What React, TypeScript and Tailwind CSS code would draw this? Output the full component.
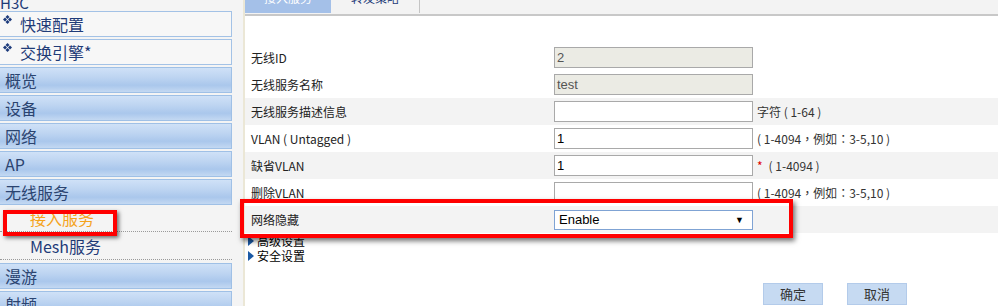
import React from "react";

const CJK = "font-['Noto_Sans_CJK_SC','Noto_Sans',sans-serif]";
const TC = "font-['Noto_Sans_CJK_TC','Noto_Sans_CJK_SC',sans-serif]";
const LAT = "font-['Liberation_Sans','Noto_Sans_CJK_SC',sans-serif]";

const Diamond = () => (
  <svg width="9" height="9" viewBox="0 0 9 9" className="absolute left-[3px] top-[3px]">
    <polygon points="4.5,0 6.5,2 4.5,4 2.5,2" fill="#1d3b7c" />
    <polygon points="2,2.5 4,4.5 2,6.5 0,4.5" fill="#1d3b7c" />
    <polygon points="7,2.5 9,4.5 7,6.5 5,4.5" fill="#1d3b7c" />
    <polygon points="4.5,5 6.5,7 4.5,9 2.5,7" fill="#1d3b7c" />
  </svg>
);

const TopItem = ({ label }: { label: string }) => (
  <div className="relative h-[26px] mb-[2px] border border-l-0 border-[#a3c2e6] bg-[#f7f7f7] flex items-center pl-[20px] text-[16px] leading-[20px] text-[#1f3b78]">
    <Diamond />
    <span>{label}</span>
  </div>
);

const MenuItem = ({ label }: { label: string }) => (
  <div className="h-[26px] mb-[2px] border border-l-0 border-[#9fc0e6] bg-[linear-gradient(180deg,#cfe1f7_0%,#bdd4f1_40%,#aac7ec_72%,#c3d8f2_100%)] flex items-center pl-[5px] text-[16px] leading-[20px] text-[#2b4470]">
    {label}
  </div>
);

type Row = {
  label: string;
  value?: string;
  disabled?: boolean;
  hint?: React.ReactNode;
  gray?: boolean;
  select?: string;
};

const rows: Row[] = [
  { label: "无线ID", value: "2", disabled: true },
  { label: "无线服务名称", value: "test", disabled: true },
  { label: "无线服务描述信息", value: "", hint: "字符 ( 1-64 )", gray: true },
  { label: "VLAN ( Untagged )", value: "1", hint: "( 1-4094，例如：3-5,10 )" },
  {
    label: "缺省VLAN",
    value: "1",
    hint: (
      <>
        <span className="text-[#e00000] mr-[6px]">*</span>( 1-4094 )
      </>
    ),
    gray: true,
  },
  { label: "删除VLAN", value: "", hint: "( 1-4094，例如：3-5,10 )" },
  { label: "网络隐藏", select: "Enable", gray: true },
];

const Arrow = () => (
  <svg width="6" height="10" viewBox="0 0 6 10" className="mr-[3px]">
    <polygon points="0,0 6,5 0,10" fill="#1b5aa5" />
  </svg>
);

export default function App() {
  return (
    <div className={`relative flex w-[998px] h-[306px] overflow-hidden bg-[#f4f4f4] ${CJK}`}>
      {/* Sidebar */}
      <aside className="w-[243px] shrink-0 pr-[11px]">
        <div className="h-[17px] overflow-visible">
          <div className="-mt-[6px] text-[15px] leading-[18px] text-[#1f3b78]">H3C</div>
        </div>
        <TopItem label="快速配置" />
        <TopItem label="交换引擎*" />
        <MenuItem label="概览" />
        <MenuItem label="设备" />
        <MenuItem label="网络" />
        <MenuItem label="AP" />
        <MenuItem label="无线服务" />
        <div className="-mt-[2px] h-[27px] border-b border-dotted border-[#9a9a9a] flex items-center pl-[30px] text-[16px] leading-[20px] text-[#f5a31c]">
          接入服务
        </div>
        <div className="h-[28px] border-b border-dotted border-[#9a9a9a] flex items-center pl-[30px] text-[16px] leading-[20px] text-[#1f3b78]">
          Mesh服务
        </div>
        <div className="mt-[3px]">
          <MenuItem label="漫游" />
          <MenuItem label="射频" />
        </div>
      </aside>

      {/* Content */}
      <main className="flex-1 border-l-2 border-[#ebe7d6] bg-white">
        {/* Tabs */}
        <div className="h-[16px] bg-[#f3f3f3] border-b-2 border-[#c8c8c8] flex items-start overflow-hidden">
          <div className="w-[86px] h-[13px] bg-[#a4c0e8] flex justify-center">
            <span className="-mt-[10px] text-[12px] leading-[15px] text-white">接入服务</span>
          </div>
          <div className="w-[89px] h-[13px] border-r border-[#c4c4c4] flex justify-center">
            <span className="-mt-[10px] text-[12px] leading-[15px] text-[#1f3b78]">转发策略</span>
          </div>
        </div>

        {/* Form */}
        <div className="mt-[28px]">
          {rows.map((r) => (
            <div
              key={r.label}
              className={`h-[27px] flex items-center pl-[6px] ${r.gray ? "bg-[#f3f3f3]" : "bg-white"}`}
            >
              <div className="w-[303px] text-[12px] leading-[16px] text-[#222] whitespace-pre">{r.label}</div>
              {r.select ? (
                <div className={`w-[199px] h-[20px] border border-[#7fa3d4] bg-white flex items-center justify-between pl-[4px] pr-[8px] text-[13px] leading-[16px] text-black ${LAT}`}>
                  <span>{r.select}</span>
                  <span className="text-[9px] leading-[10px]">▼</span>
                </div>
              ) : (
                <div
                  className={`w-[199px] h-[21px] border border-[#a9a9a9] flex items-center pl-[2px] text-[13px] leading-[16px] ${LAT} ${
                    r.disabled ? "bg-[#ebebe4] text-[#555]" : "bg-white text-black"
                  }`}
                >
                  {r.value}
                </div>
              )}
              {r.hint && (
                <div className={`ml-[4px] text-[12px] leading-[16px] text-[#333] whitespace-pre ${TC}`}>{r.hint}</div>
              )}
            </div>
          ))}
          <div className="pl-[3px] text-[12px] text-black">
            <div className="h-[15px] flex items-center leading-[15px]">
              <Arrow />
              高级设置
            </div>
            <div className="h-[15px] flex items-center leading-[15px]">
              <Arrow />
              安全设置
            </div>
          </div>
          <div className="mt-[20px] pl-[518px] flex gap-[24px]">
            <button className="w-[60px] h-[22px] bg-[#c6daf2] border border-[#b3cbea] text-[13px] leading-[16px] text-[#333]">
              确定
            </button>
            <button className="w-[60px] h-[22px] bg-[#c6daf2] border border-[#b3cbea] text-[13px] leading-[16px] text-[#333]">
              取消
            </button>
          </div>
        </div>
      </main>

      {/* Red annotation boxes */}
      <div className="absolute left-[3px] top-[210px] w-[114px] h-[26px] border-4 border-[#ff0000] shadow-[2px_2px_4px_rgba(0,0,0,0.55)]" />
      <div className="absolute left-[240px] top-[199px] w-[553px] h-[39px] border-4 border-[#ff0000] shadow-[2px_3px_5px_rgba(0,0,0,0.55)]" />
    </div>
  );
}
